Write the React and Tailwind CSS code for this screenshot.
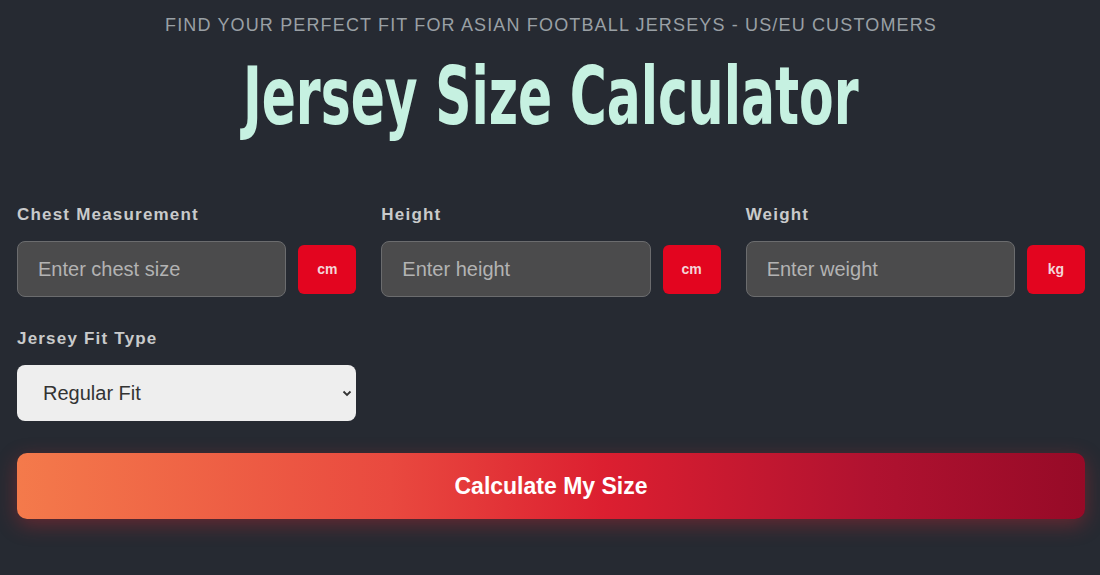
import React from 'react';

const fields = [
  { label: 'Chest Measurement', placeholder: 'Enter chest size', unit: 'cm' },
  { label: 'Height', placeholder: 'Enter height', unit: 'cm' },
  { label: 'Weight', placeholder: 'Enter weight', unit: 'kg' },
];

const Field = ({ label, placeholder, unit }) => (
  <div className="flex flex-col">
    <label className="text-[17px] font-bold tracking-[1.2px] text-[#c9cacb] leading-none mb-[18px]">{label}</label>
    <div className="flex items-center gap-3">
      <input
        type="text"
        placeholder={placeholder}
        className="flex-1 min-w-0 h-[56px] rounded-[8px] bg-[#4b4b4c] border border-[#6b6c6e] pl-[20px] text-[20px] text-white placeholder:text-[#b3b3b3] outline-none"
      />
      <span className="w-[58px] h-[49px] rounded-[6px] bg-[#e3051f] flex items-center justify-center text-[14px] font-bold text-[#f3d5d8]">
        {unit}
      </span>
    </div>
  </div>
);

const App = () => {
  return (
    <div
      className="w-[1100px] h-[575px] overflow-hidden bg-[#262a32] pl-[17px] pr-[15px]"
      style={{ fontFamily: '"Liberation Sans", Arial, sans-serif' }}
    >
      <p className="pt-[15px] text-center text-[18px] tracking-[1.15px] text-[#9aa0a5] leading-[20px]">
        FIND YOUR PERFECT FIT FOR ASIAN FOOTBALL JERSEYS - US/EU CUSTOMERS
      </p>
      <h1
        className="mt-[14px] text-center text-[80px] font-bold leading-[96px] text-[#c6f1e1] whitespace-nowrap"
        style={{ fontFamily: '"DejaVu Sans Condensed", "DejaVu Sans", sans-serif' }}
      >
        <span className="inline-block scale-x-[0.7]">Jersey Size Calculator</span>
      </h1>

      <div className="mt-[61px] grid grid-cols-3 gap-x-[25px]">
        {fields.map((f) => (
          <Field key={f.label} {...f} />
        ))}
      </div>

      <div className="mt-[33px] flex flex-col">
        <label className="text-[17px] font-bold tracking-[1.2px] text-[#c9cacb] leading-none mb-[18px]">Jersey Fit Type</label>
        <div className="relative w-[339px] h-[56px]">
          <select className="w-full h-full appearance-none rounded-[8px] bg-[#eeeeee] pl-[26px] text-[20px] text-[#333] outline-none">
            <option>Regular Fit</option>
            <option>Slim Fit</option>
            <option>Loose Fit</option>
          </select>
          <svg className="absolute right-[4px] top-[23px] w-[10px] h-[10px] pointer-events-none" viewBox="0 0 10 10" fill="none" stroke="#333" strokeWidth="1.8">
            <path d="M1.5 3.5L5 7l3.5-3.5" />
          </svg>
        </div>
      </div>

      <button className="mt-[32px] w-full h-[66px] rounded-[10px] bg-[linear-gradient(90deg,#f47a4b_0%,#e9493f_35%,#dc1f30_55%,#b01230_80%,#960a27_100%)] shadow-[0_6px_20px_rgba(220,40,50,0.35)] text-white text-[23px] font-bold">
        Calculate My Size
      </button>
    </div>
  );
};

export default App;
